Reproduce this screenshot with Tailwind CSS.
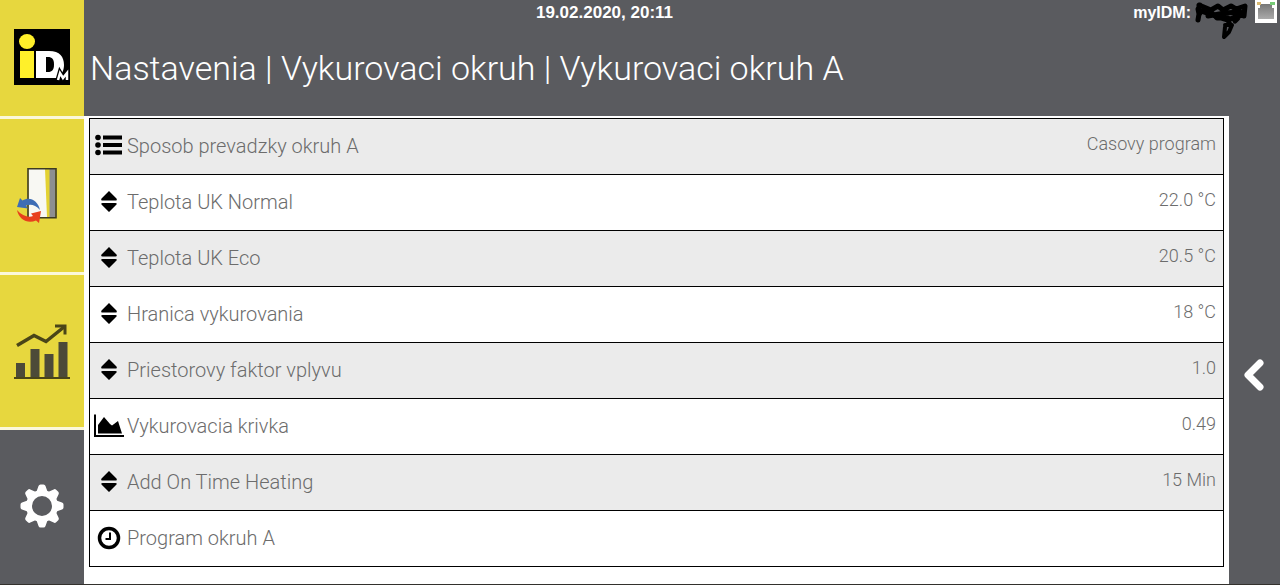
<!DOCTYPE html>
<html lang="sk">
<head>
<meta charset="utf-8">
<meta name="viewport" content="width=device-width, initial-scale=1">
<title>Nastavenia | Vykurovaci okruh A</title>
<script src="https://cdn.jsdelivr.net/npm/@tailwindcss/browser@4"></script>
</head>
<body class="flex min-h-screen flex-col border-b border-[#33312d] bg-[#5a5b5f] font-['Roboto','Liberation_Sans',sans-serif]">
<svg class="hidden" aria-hidden="true">
  <symbol id="sort" viewBox="0 0 30 30"><path d="M15 4 22.500 11.500Q23.500 13.500 21.500 13.500H8.500Q6.500 13.500 7.500 11.500ZM15 25 22.500 17.500Q23.500 16 21.500 16H8.500Q6.500 16 7.500 17.500Z"/></symbol>
</svg>
<div class="flex grow">
  <nav class="flex w-21 shrink-0 flex-col gap-[3px] bg-[#fbf8dc]" aria-label="Menu">
    <a href="#" aria-label="iDM" class="flex h-29 items-center justify-center bg-[#e7d73e] pb-0.5">
      <svg class="size-14" viewBox="0 0 56 56">
        <rect width="56" height="56" fill="#000"/>
        <ellipse cx="13" cy="12.500" rx="8" ry="7.500" fill="#fff02a"/>
        <rect x="6" y="22" width="14" height="27" fill="#fff02a"/>
        <path fill="#fff" fill-rule="evenodd" d="M22 22H35C46 22 50 28 50 36C50 41 48 45 45 47L43 49H22ZM32 28V43H34C38 43 40 41 40 35.500C40 30 38 28 34 28Z"/>
        <path d="M44 51 46 44 49 49 52 44 53 51" fill="none" stroke="#000" stroke-width="5"/>
        <path d="M44 51 46 44 49 49 53 44V51" fill="none" stroke="#fff" stroke-width="2.500"/>
      </svg>
    </a>
    <a href="#" aria-label="Domov" class="flex h-[153px] items-center justify-center bg-[#e7d73e]">
      <svg class="size-14" viewBox="0 0 56 56">
        <path fill="#f8f8f3" d="M14.500 1h19v48h-19z"/>
        <path fill="#e3d232" d="M31 1h5v48h-3z"/>
        <path fill="#8d8e91" d="M35.500 1h6v48h-6z"/>
        <path fill="none" stroke="#3d3b22" stroke-width="1.600" d="M14 .8h28v49H14z"/>
        <path fill="#3d6db5" d="M3 39 6 30 8.500 32.500C16 28 24 33 26 42C21 36 16 36 12 37.500L14 40.500Z"/>
        <path fill="#e8401c" d="M3 42C8 48 15 50 19 48L17 45.500 27 43 25 55 22 52.500C14 56 5 52 3 42Z"/>
      </svg>
    </a>
    <a href="#" aria-label="Statistika" class="flex h-[152px] items-center justify-center bg-[#e7d73e]">
      <svg class="size-14" viewBox="0 0 56 56">
        <g fill="#4c4a38"><path d="M2 40h9v14H2zM16.500 26h9v28h-9zM30.500 31h9v23h-9zM44.500 19h9v35h-9z"/></g>
        <path fill="#4a4518" d="M0 54h56v2H0z"/>
        <path fill="none" stroke="#4a4518" stroke-width="3.500" d="M3 22.500 20 12.500 32 18.500 50 4"/>
        <path fill="none" stroke="#4a4518" stroke-width="3" d="M41 3H51V11.500"/>
      </svg>
    </a>
    <a href="#" aria-label="Nastavenia" aria-current="page" class="flex grow items-center justify-center bg-[#5a5b5f] pb-0.5">
      <svg class="size-11" viewBox="-22 -22 44 44" fill="#fff">
        <path fill-rule="evenodd" d="M-16 0A16 16 0 1 0 16 0A16 16 0 1 0-16 0ZM-10 0A10 10 0 1 1 10 0A10 10 0 1 1-10 0Z"/>
        <g id="teeth"><path id="tooth" d="M-6-13-3.500-20Q-3-21.500-1.500-21.500H1.500Q3-21.500 3.500-20L6-13Z"/>
        <use href="#tooth" transform="rotate(45)"/><use href="#tooth" transform="rotate(90)"/><use href="#tooth" transform="rotate(135)"/></g>
        <use href="#teeth" transform="rotate(180)"/>
      </svg>
    </a>
  </nav>
  <div class="flex min-w-0 grow flex-col">
    <header class="flex h-29 shrink-0 flex-col text-white">
      <div class="grid h-6 grid-cols-[1fr_auto_1fr] items-center pr-[3px] font-['Liberation_Sans',sans-serif]">
        <span></span>
        <time datetime="2020-02-19T20:11" class="mr-38 text-[17px] font-bold">19.02.2020, 20:11</time>
        <div class="flex items-center justify-end gap-1">
          <span class="text-base font-bold">myIDM:</span>
          <svg class="-mb-4 h-10 w-14" viewBox="0 0 56 40" fill="none" stroke="#000" stroke-linecap="round" stroke-linejoin="round"><path stroke-width="5" d="M5 4 3 8 4 13 3 19M4 4 16 9 23 5 28 9 36 5 41 8 50 5 49 15M6 10 20 15 33 19 42 15 49 14M13 15 30 12 45 11M16 11 22 17 33 17M33 19 35 24M40 20 43 17"/><path stroke-width="4" d="M30 24H37L34 31 29 36M30 26 29 36M4 14 10 7"/></svg>
          <svg class="-mt-1 h-6 w-[22px]" viewBox="0 0 22 24"><defs><linearGradient id="lan" x2="0" y2="1"><stop stop-color="#777"/><stop offset="1" stop-color="#aaa"/></linearGradient></defs><path fill="#fff" d="M0 1h22v23H0z"/><path fill="url(#lan)" d="M3 9H5V5H17V9H19V20H3Z"/><path fill="#d9ba72" d="M2 3h4v3H2z"/><path fill="#76ca76" d="M15 3h5v3h-5z"/></svg>
        </div>
      </div>
      <h1 class="pt-5 pl-[6px] text-[34px] leading-12 font-light whitespace-nowrap">Nastavenia | Vykurovaci okruh | Vykurovaci okruh A</h1>
    </header>
    <div class="flex grow">
      <main class="grow bg-white px-[5px] pt-[2px] pb-4">
        <ul class="divide-y divide-black border border-black text-xl font-light text-[#6c6c6c] [&_button]:flex [&_button]:h-[55px] [&_button]:w-full [&_button]:items-center [&_button]:pr-[7px] [&_button]:pl-1 [&_button]:pb-[2px] [&_svg]:size-[30px] [&_svg]:shrink-0 [&_svg]:text-black [&_.value]:ml-auto [&_.value]:pb-1 [&_.value]:text-lg [&_.label]:ml-[3px]">
          <li class="bg-[#ebebeb]"><button type="button"><svg viewBox="0 0 30 30" fill="currentColor"><circle cx="4" cy="6.500" r="2.800"/><circle cx="4" cy="14" r="2.800"/><circle cx="4" cy="21.500" r="2.800"/><path d="M9 4.500h19v4H9zM9 12h19v4H9zM9 19.500h19v4H9z"/></svg><span class="label">Sposob prevadzky okruh A</span><span class="value">Casovy program</span></button></li>
          <li><button type="button"><svg><use href="#sort"/></svg><span class="label">Teplota UK Normal</span><span class="value">22.0 °C</span></button></li>
          <li class="bg-[#ebebeb]"><button type="button"><svg><use href="#sort"/></svg><span class="label">Teplota UK Eco</span><span class="value">20.5 °C</span></button></li>
          <li><button type="button"><svg><use href="#sort"/></svg><span class="label">Hranica vykurovania</span><span class="value">18 °C</span></button></li>
          <li class="bg-[#ebebeb]"><button type="button"><svg><use href="#sort"/></svg><span class="label">Priestorovy faktor vplyvu</span><span class="value">1.0</span></button></li>
          <li><button type="button"><svg viewBox="0 0 30 30" fill="currentColor"><path d="M0 3.500H2V24H30V26H0Z"/><path d="M4 22.500V14L10 6 16 13 18 14.500 24 10 28 22.500Z"/></svg><span class="label">Vykurovacia krivka</span><span class="value">0.49</span></button></li>
          <li class="bg-[#ebebeb]"><button type="button"><svg><use href="#sort"/></svg><span class="label">Add On Time Heating</span><span class="value">15 Min</span></button></li>
          <li><button type="button"><svg viewBox="0 0 30 30" fill="none" stroke="currentColor"><circle cx="15" cy="15" r="9.500" stroke-width="3.500"/><path stroke-width="2" d="M16 9.500V16H11.500"/></svg><span class="label">Program okruh A</span></button></li>
        </ul>
      </main>
      <aside class="flex w-[51px] shrink-0 justify-center bg-[#5a5b5f]">
        <button type="button" aria-label="Spat" class="flex w-full items-center justify-center pt-12 text-white"><svg class="size-10" viewBox="0 0 40 40" fill="none" stroke="currentColor" stroke-width="7" stroke-linecap="round" stroke-linejoin="round"><path d="M25 9 13 21 25 33"/></svg></button>
      </aside>
    </div>
  </div>
</div>
</body>
</html>
